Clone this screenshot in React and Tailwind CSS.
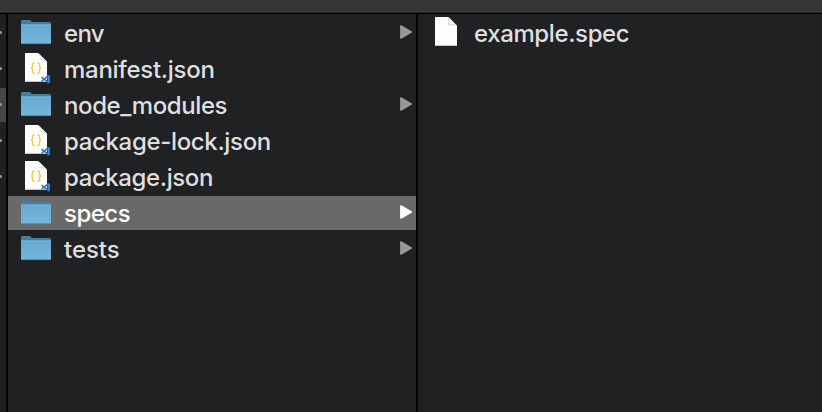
const entries = [
  { name: "env", type: "folder", tracking: "tracking-[-0.7px]" },
  { name: "manifest.json", type: "json", tracking: "tracking-[-0.28px]" },
  { name: "node_modules", type: "folder", tracking: "tracking-[-0.4px]" },
  { name: "package-lock.json", type: "json", tracking: "tracking-[-0.34px]" },
  { name: "package.json", type: "json", tracking: "tracking-[-0.4px]" },
  { name: "specs", type: "folder", selected: true, tracking: "tracking-[-0.5px]" },
  { name: "tests", type: "folder", tracking: "tracking-[-0.05px]" },
];

const parentRows = [{}, {}, { selected: true }, {}, {}];

function FolderIcon() {
  return (
    <svg width="34" height="34" viewBox="0 0 34 34" className="block">
      <defs>
        <linearGradient id="folderFront" x1="0" y1="0" x2="0" y2="1">
          <stop offset="0" stopColor="#67a9ce" />
          <stop offset="1" stopColor="#76b8dc" />
        </linearGradient>
      </defs>
      <path d="M2 11V5.6Q2 4.1 3.6 4.1H10q1.2 0 2 .9l.7.7q.5.4 1.3.4h16.4Q32 6.1 32 7.7V11z" fill="#457d9b" />
      <path d="M2 8.6h30v17.8q0 1.4-1.4 1.4H3.4Q2 27.8 2 26.4z" fill="url(#folderFront)" />
      <path d="M2 9h30" stroke="#7dbfe0" strokeWidth=".8" />
      <path d="M2.4 27.2q.5.5 1.2.5h26.8q.7 0 1.2-.5" stroke="#4d87a8" strokeWidth=".8" fill="none" />
    </svg>
  );
}

function PageShape() {
  return (
    <>
      <path d="M6 1h12.6q1 0 1.8.8l6.8 7q.8.8.8 1.8V29.8H6z" fill="#fdfdfd" />
      <path d="M19.2 1.2v7.2q0 .8.8.8h7.6z" fill="#d2d2d2" />
      <path d="M20.2 2.9v4.8q0 .5.5.5h5z" fill="#fbfbfb" />
    </>
  );
}

function JsonIcon() {
  return (
    <svg width="34" height="34" viewBox="0 0 34 34" className="block">
      <path d="M6 1h12.4q1.2 0 2 1l6.6 6.4q1 1 1 2.2v19.2H6z" fill="#fdfdfd" />
      <path d="M19.4 1.3q1.6 3 .2 7 4.4-1.2 8 1.4z" fill="#d8d8d8" />
      <path d="M20 3q.5 2.4-.2 4.7 2.8-.7 5.4-.1z" fill="#fafafa" />
      <g fill="none" stroke="#ecd34b" strokeWidth="1.5">
        <path d="M15.7 10.9h-.8q-1.4 0-1.4 1.4v2.3q0 1.4-1.6 1.5 1.6.1 1.6 1.5v2.3q0 1.4 1.4 1.4h.8" />
        <path d="M18.3 10.9h.8q1.4 0 1.4 1.4v2.3q0 1.4 1.6 1.5-1.6.1-1.6 1.5v2.3q0 1.4-1.4 1.4h-.8" />
      </g>
      <path d="M22.6 25.1l6.2 5M22.6 29.2l6.2-5" stroke="#2f73c0" strokeWidth="1.5" />
      <path d="M28.6 22.8l2.3 1.1v6.6l-2.3 1.2z" fill="#378ee0" />
    </svg>
  );
}

function FileIcon() {
  return (
    <svg width="34" height="34" viewBox="0 0 34 34" className="block">
      <PageShape />
    </svg>
  );
}

function Arrow({ selected }) {
  return (
    <svg width="12" height="14" viewBox="0 0 12 14" className="block">
      <path
        d="M1 1.1L11.1 7 1 12.9z"
        fill={selected ? "#fff" : "#98989a"}
        stroke={selected ? "#fff" : "#98989a"}
        strokeWidth="1.8"
        strokeLinejoin="round"
      />
    </svg>
  );
}

function Entry({ name, type, selected, tracking }) {
  return (
    <li className={"flex h-[34px] items-center pl-[11px] pr-1 " + (selected ? "bg-[#696969] text-white" : "text-[#dfdfe0]")}>
      {type === "folder" ? <FolderIcon /> : <JsonIcon />}
      <span className={"ml-[11px] grow whitespace-pre pt-0.5 text-2xl font-[450] leading-[34px] " + tracking}>{name}</span>
      {type === "folder" && (
        <span className="pb-0.5">
          <Arrow selected={selected} />
        </span>
      )}
    </li>
  );
}

export default function App() {
  return (
    <div className="flex h-[412px] w-[822px] flex-col overflow-hidden bg-[#202123] font-['Inter',sans-serif]">
      <header className="h-[14px] shrink-0 border-b border-black bg-[#363739]">
        <div className="h-3" />
        <div className="h-px bg-[#29292b]" />
      </header>
      <main className="flex grow">
        <aside className="flex w-2 flex-col gap-0.5 border-r-2 border-black pt-0.5">
          {parentRows.map((row, i) => (
            <div key={i} className={"flex h-[34px] items-center pb-0.5 " + (row.selected ? "bg-[#464646]" : "")}>
              <span className="h-[3px] w-[2px] rounded-r-full bg-[#98989a]" />
            </div>
          ))}
        </aside>
        <ul className="flex w-[410px] flex-col gap-0.5 border-r-2 border-black pt-0.5">
          {entries.map((entry) => (
            <Entry key={entry.name} {...entry} />
          ))}
        </ul>
        <section className="grow pt-0.5">
          <div className="flex h-[34px] items-center pl-[11px] text-[#dfdfe0]">
            <FileIcon />
            <span className="ml-[11px] whitespace-pre pt-0.5 text-2xl font-[450] leading-[34px] tracking-[-0.38px]">example.spec</span>
          </div>
        </section>
      </main>
    </div>
  );
}
